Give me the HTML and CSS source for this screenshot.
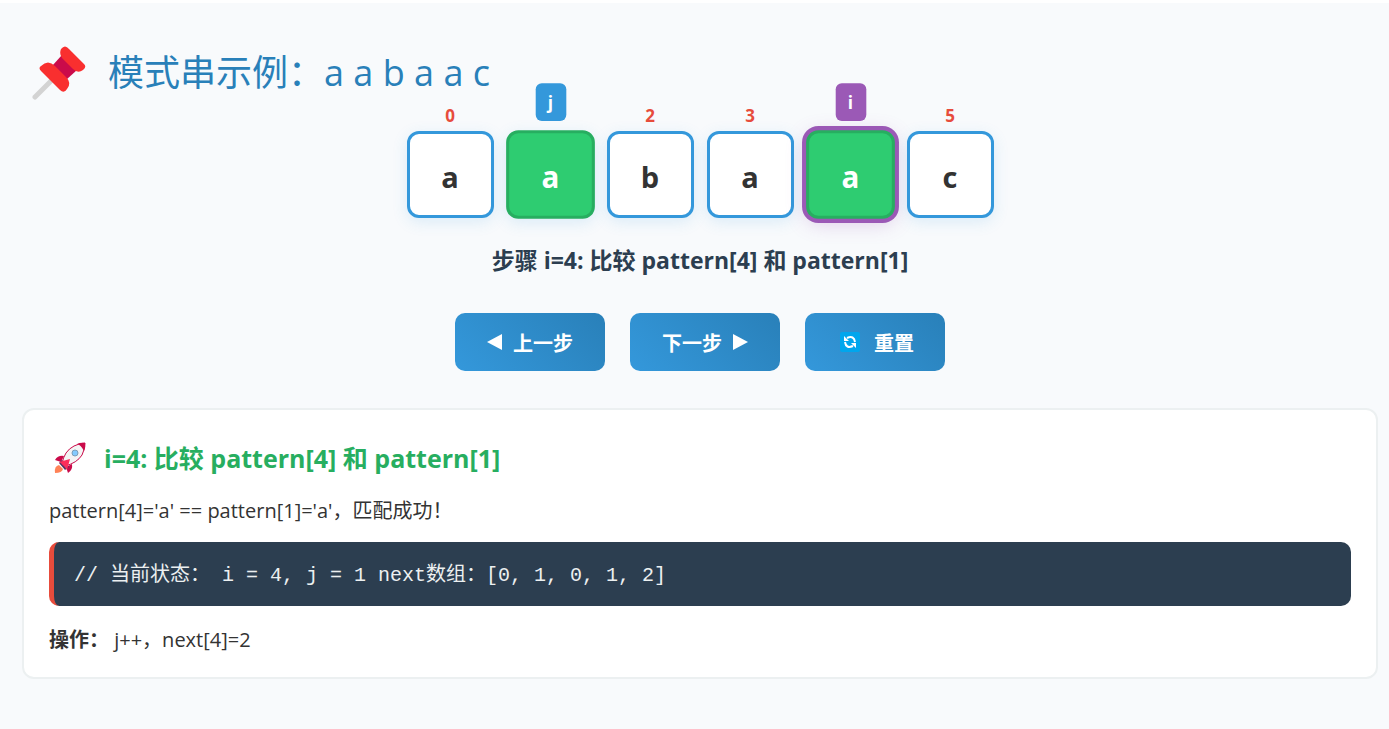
FILE: index.html
```html
<!DOCTYPE html>
<html lang="zh-CN">
<head>
    <meta charset="UTF-8">
    <meta name="viewport" content="width=device-width, initial-scale=1.0">
    <title>KMP next数组演示</title>
    <link rel="stylesheet" href="styles.css">
</head>
<body>
    <main class="demo">
        <h2 class="title">
            <svg class="pin" viewBox="0 0 54 54" aria-hidden="true">
                <path d="M3 51 L21 33" stroke="#d3d3d3" stroke-width="5" stroke-linecap="round"/>
                <path d="M20 20 L30 9 L45 24 L34 34 Z" fill="#ca0b4a"/>
                <path d="M29 3 Q33 -2 37 3 L52 18 Q55 21 51 24 Q46 28 41 23 L30 12 Q27 8 29 3 Z" fill="#f92f2f"/>
                <path d="M9 20 Q16 13 23 20 L34 31 Q40 37 35 43 Q32 48 28 44 L9 25 Q6 22 9 20 Z" fill="#f92f2f"/>
            </svg>
            <span>模式串示例：a a b a a c</span>
        </h2>

        <div class="pattern">
            <div class="cell"><span class="index">0</span>a</div>
            <div class="cell matched"><span class="index">1</span><span class="pointer pointer-j">j</span>a</div>
            <div class="cell"><span class="index">2</span>b</div>
            <div class="cell"><span class="index">3</span>a</div>
            <div class="cell matched current"><span class="index">4</span><span class="pointer pointer-i">i</span>a</div>
            <div class="cell"><span class="index">5</span>c</div>
        </div>

        <div class="step-info">步骤 i=4: 比较 pattern[4] 和 pattern[1]</div>

        <div class="controls">
            <button type="button">
                <svg class="arrow" viewBox="0 0 16 16" aria-hidden="true"><path d="M0 8 L15 0 V16 Z" fill="#fff"/></svg>
                上一步
            </button>
            <button type="button">
                下一步
                <svg class="arrow" viewBox="0 0 16 16" aria-hidden="true"><path d="M16 8 L1 0 V16 Z" fill="#fff"/></svg>
            </button>
            <button type="button" class="reset">
                <svg class="reload" viewBox="0 0 20 20" aria-hidden="true">
                    <rect width="20" height="20" rx="2" fill="#00a6ed"/>
                    <path d="M7 6 Q14 3 15 10 M13 14 Q6 17 5 10" fill="none" stroke="#fff" stroke-width="2"/>
                    <path d="M4 4 V9 H9 Z M16 16 V11 H11 Z" fill="#fff"/>
                </svg>
                重置
            </button>
        </div>

        <section class="card">
            <h3>
                <svg class="rocket" viewBox="0 0 32 32" aria-hidden="true">
                    <path d="M1 31 Q0 24 5 23 L9 27 Q8 31 1 31 Z" fill="#ff8257"/>
                    <path d="M10 14 Q4 13 1 18 L7 20 Z M18 22 Q19 28 14 31 L12 25 Z" fill="#ca0b4a"/>
                    <path d="M5 21 L8 18 L15 25 L11 28 Z" fill="#533566"/>
                    <path d="M8 22 Q10 9 20 4 Q26 1 31 1 Q31 7 28 13 Q23 21 11 24 Z" fill="#f4f4f4" stroke="#ca0b4a"/>
                    <path d="M23 2 Q27 0 31 1 Q32 5 30 9 Q27 3 23 2 Z" fill="#ca0b4a"/>
                    <path d="M5 20 L16 17 L13 28 Q9 22 5 20 Z" fill="#fb2d5b"/>
                    <circle cx="21" cy="11" r="3" fill="#83cbff" stroke="#7b9eb8"/>
                </svg>
                <span>i=4: 比较 pattern[4] 和 pattern[1]</span>
            </h3>
            <p>pattern[4]='a' == pattern[1]='a'，匹配成功！</p>
            <div class="code">// 当前状态： i = 4, j = 1 next数组：[0, 1, 0, 1, 2]</div>
            <p><strong>操作：</strong> j++，next[4]=2</p>
        </section>
    </main>
</body>
</html>
```

FILE: styles.css
```css
* {
    box-sizing: border-box;
}
body {
    margin: 0;
    background: #f8fafc;
    border-top: 3px solid #fff;
    color: #333;
    font-family: 'Open Sans', 'Noto Sans CJK SC', sans-serif;
    font-size: 20px;
    line-height: 28px;
}
.demo {
    padding: 43px 11px 50px 22px;
}
.title {
    display: flex;
    align-items: center;
    gap: 22px;
    height: 54px;
    margin: 0 0 31px;
    padding-left: 10px;
    color: #2980b9;
    font-size: 36px;
    font-weight: 400;
    line-height: 54px;
}
.pin {
    width: 54px;
    height: 54px;
}
.pattern {
    display: flex;
    justify-content: center;
    gap: 13px;
    margin-bottom: 24px;
}
.cell {
    position: relative;
    display: flex;
    align-items: center;
    justify-content: center;
    width: 87px;
    height: 87px;
    padding-top: 4px;
    background: #fff;
    border: 3px solid #3498db;
    border-radius: 12px;
    box-shadow: 0 4px 15px rgba(52, 152, 219, 0.15);
    font-size: 29px;
    font-weight: 700;
}
.matched {
    background: #2ecc71;
    border-color: #27ae60;
    color: #fff;
    transform: scale(1.02);
}
.current {
    box-shadow: 0 0 0 4px #9b59b6, 0 4px 20px rgba(155, 89, 182, 0.3);
}
.index {
    position: absolute;
    top: -32px;
    left: 0;
    width: 100%;
    color: #e74c3c;
    font-size: 17px;
    text-align: center;
}
.pointer {
    position: absolute;
    top: -49px;
    left: 50%;
    margin-left: -15px;
    width: 30px;
    height: 37px;
    border-radius: 6px;
    font-size: 17px;
    line-height: 37px;
    text-align: center;
}
.pointer-j {
    background: #3498db;
}
.pointer-i {
    background: #9b59b6;
}
.step-info {
    margin-bottom: 35px;
    color: #2c3e50;
    font-size: 23px;
    font-weight: 700;
    line-height: 36px;
    text-align: center;
}
.controls {
    display: flex;
    justify-content: center;
    gap: 25px;
    margin-bottom: 37px;
}
button {
    display: flex;
    align-items: center;
    gap: 10px;
    height: 58px;
    padding: 0 32px;
    border: none;
    border-radius: 10px;
    background: linear-gradient(45deg, #3498db, #2980b9);
    color: #fff;
    font-family: inherit;
    font-size: 20px;
    font-weight: 700;
    cursor: pointer;
}
.arrow {
    width: 16px;
    height: 16px;
}
.reset {
    gap: 14px;
    padding: 0 31px 0 35px;
}
.reload {
    width: 20px;
    height: 20px;
}
.card {
    padding: 25px 25px 23px;
    background: #fff;
    border: 2px solid #ecf0f1;
    border-radius: 12px;
}
h3 {
    display: flex;
    align-items: center;
    gap: 18px;
    margin: 0 0 16px;
    padding-left: 5px;
    color: #27ae60;
    font-size: 25px;
    line-height: 46px;
}
.rocket {
    width: 32px;
    height: 32px;
}
p {
    margin: 0;
}
.code {
    margin: 17px 0 20px;
    padding: 20px 20px 16px;
    background: #2c3e50;
    border-left: 5px solid #e74c3c;
    border-radius: 10px;
    color: #ecf0f1;
    font-family: 'Liberation Mono', 'Noto Sans CJK SC', monospace;
}
```
